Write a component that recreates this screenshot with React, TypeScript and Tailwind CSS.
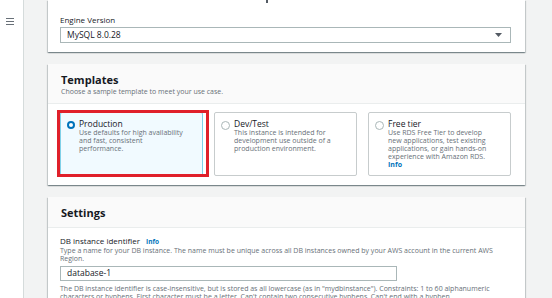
import React from "react";

const font = { fontFamily: '"Open Sans", "Noto Sans", sans-serif' };

function Radio({ checked }: { checked?: boolean }) {
  return checked ? (
    <span className="mt-[2px] box-border block h-[8px] w-[8px] shrink-0 rounded-full border-[2.5px] border-[#0073bb] bg-white" />
  ) : (
    <span className="mt-[2px] box-border block h-[9px] w-[9px] shrink-0 rounded-full border border-[#aab7b8] bg-white" />
  );
}

function Card({
  title,
  lines,
  checked,
  info,
}: {
  title: string;
  lines: string[];
  checked?: boolean;
  info?: boolean;
}) {
  return (
    <div
      className={
        "relative flex h-[64px] w-[143px] gap-[4px] rounded-[2px] border px-[6px] pt-[6px] " +
        (checked ? "border-[#7fd0e8] bg-[#f1faff]" : "border-[#c7cccd] bg-white")
      }
    >
      <Radio checked={checked} />
      <div className="flex flex-col">
        <div className="text-[8.5px] leading-[10px] text-[#16191f]">{title}</div>
        {lines.map((l) => (
          <div key={l} className="whitespace-nowrap text-[7px] leading-[8px] text-[#687078]">
            {l}
          </div>
        ))}
        {info && <div className="text-[7px] font-bold leading-[8px] text-[#0073bb]">Info</div>}
      </div>
      {checked && (
        <div className="pointer-events-none absolute left-[-4px] top-[-3px] h-[67px] w-[152px] border-[3px] border-[#e0202a]" />
      )}
    </div>
  );
}

const panelShadow =
  "shadow-[0_1px_1px_0_rgba(0,28,36,0.3),1px_1px_1px_0_rgba(0,28,36,0.15),-1px_1px_1px_0_rgba(0,28,36,0.15)]";

export default function App() {
  return (
    <div className="relative flex h-[298px] w-[552px] overflow-hidden bg-white" style={font}>
      <div className="flex w-[24px] shrink-0 flex-col border-r border-[#d5dbdb] bg-white pl-[6px] pt-[18px]">
        <div className="flex w-[8px] flex-col gap-[2px]">
          <span className="block h-[1px] w-[8px] bg-[#687078]" />
          <span className="block h-[1px] w-[8px] bg-[#687078]" />
          <span className="block h-[1px] w-[8px] bg-[#687078]" />
        </div>
      </div>
      <div className="absolute left-[266px] top-0 h-[3px] w-[2px] bg-[#545b64]" />
      <div className="flex flex-1 flex-col gap-[12px] bg-[#f2f3f3] pl-[24px] pr-[27px]">
        {/* Engine version panel */}
        <div className={"flex flex-col bg-white pb-[9px] pl-[12px] pr-[14px] pt-[14px] " + panelShadow}>
          <div className="text-[8px] leading-[12px] text-[#16191f]">Engine Version</div>
          <div className="mt-[1px] flex h-[16px] items-center justify-between border border-[#aab7b8] pl-[6px] pr-[8px]">
            <span className="text-[8.5px] text-[#16191f]">MySQL 8.0.28</span>
            <svg width="7" height="4" viewBox="0 0 7 4">
              <path d="M0 0 L7 0 L3.5 4 Z" fill="#545b64" />
            </svg>
          </div>
        </div>

        {/* Templates panel */}
        <div className={"flex flex-col bg-white " + panelShadow}>
          <div className="flex h-[40px] flex-col border-b border-[#eaeded] bg-[#fafafa] pl-[13px] pt-[8px]">
            <div className="text-[11px] font-bold leading-[15px] text-[#16191f]">Templates</div>
            <div className="text-[7px] leading-[10px] text-[#687078]">
              Choose a sample template to meet your use case.
            </div>
          </div>
          <div className="flex gap-[11px] pb-[9px] pl-[12px] pt-[8px]">
            <Card
              checked
              title="Production"
              lines={["Use defaults for high availability", "and fast, consistent", "performance."]}
            />
            <Card
              title="Dev/Test"
              lines={["This instance is intended for", "development use outside of a", "production environment."]}
            />
            <Card
              title="Free tier"
              info
              lines={[
                "Use RDS Free Tier to develop",
                "new applications, test existing",
                "applications, or gain hands-on",
                "experience with Amazon RDS.",
              ]}
            />
          </div>
        </div>

        {/* Settings panel */}
        <div className={"flex flex-1 flex-col bg-white " + panelShadow}>
          <div className="flex h-[31px] items-center border-b border-[#eaeded] bg-[#fafafa] pl-[13px]">
            <div className="text-[11px] font-bold leading-[15px] text-[#16191f]">Settings</div>
          </div>
          <div className="flex flex-col pl-[12px] pr-[14px] pt-[7px]">
            <div className="flex items-baseline gap-[6px]">
              <span className="text-[8px] leading-[11px] text-[#16191f]">DB instance identifier</span>
              <span className="text-[6.5px] font-bold leading-[11px] text-[#0073bb]">Info</span>
            </div>
            <div className="text-[7px] leading-[8px] text-[#687078]">
              Type a name for your DB instance. The name must be unique across all DB instances owned by your AWS
              account in the current AWS Region.
            </div>
            <div className="mt-[3px] flex h-[15px] w-[337px] items-center border border-[#aab7b8] pl-[6px]">
              <span className="text-[8.5px] text-[#16191f]">database-1</span>
            </div>
            <div className="mt-[4px] text-[7px] leading-[8px] text-[#687078]">
              The DB instance identifier is case-insensitive, but is stored as all lowercase (as in "mydbinstance").
              Constraints: 1 to 60 alphanumeric characters or hyphens. First character must be a letter. Can't contain
              two consecutive hyphens. Can't end with a hyphen.
            </div>
          </div>
        </div>
      </div>
    </div>
  );
}
